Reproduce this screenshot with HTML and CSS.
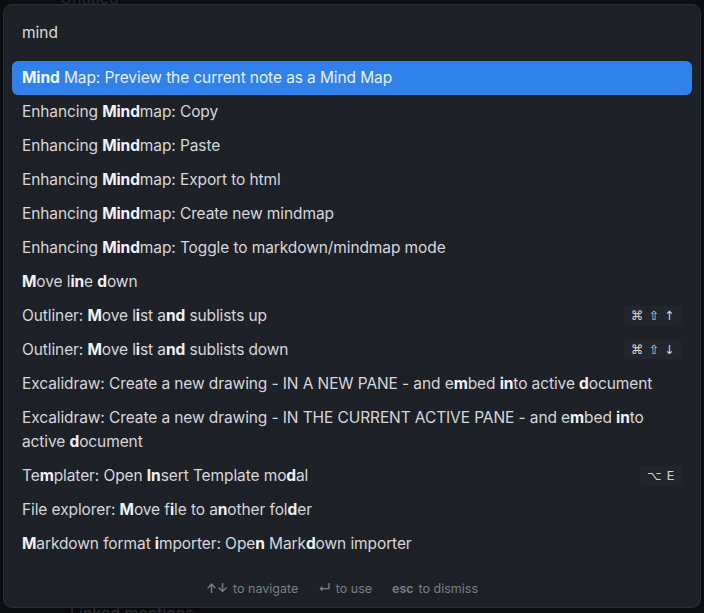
FILE: index.html
```html
<!DOCTYPE html>
<html>
<head>
<meta charset="utf-8">
<link rel="stylesheet" href="styles.css">
</head>
<body>
<div class="backdrop">
  <div class="bg-top">Untitled</div>
  <div class="bg-bottom">Linked mentions</div>
</div>
<div class="modal">
  <div class="search">mind</div>
  <div class="list">
    <div class="item selected"><span class="item-text"><b>Mind</b> Map: Preview the current note as a Mind Map</span></div>
    <div class="item"><span class="item-text">Enhancing <b>Mind</b>map: Copy</span></div>
    <div class="item"><span class="item-text">Enhancing <b>Mind</b>map: Paste</span></div>
    <div class="item"><span class="item-text">Enhancing <b>Mind</b>map: Export to html</span></div>
    <div class="item"><span class="item-text">Enhancing <b>Mind</b>map: Create new mindmap</span></div>
    <div class="item"><span class="item-text">Enhancing <b>Mind</b>map: Toggle to markdown/mindmap mode</span></div>
    <div class="item"><span class="item-text"><b>M</b>ove l<b>in</b>e <b>d</b>own</span></div>
    <div class="item"><span class="item-text">Outliner: <b>M</b>ove l<b>i</b>st a<b>nd</b> sublists up</span><span class="hotkey">⌘ ⇧ ↑</span></div>
    <div class="item"><span class="item-text">Outliner: <b>M</b>ove l<b>i</b>st a<b>nd</b> sublists down</span><span class="hotkey">⌘ ⇧ ↓</span></div>
    <div class="item"><span class="item-text">Excalidraw: Create a new drawing - IN A NEW PANE - and e<b>m</b>bed <b>in</b>to active <b>d</b>ocument</span></div>
    <div class="item"><span class="item-text">Excalidraw: Create a new drawing - IN THE CURRENT ACTIVE PANE - and e<b>m</b>bed <b>in</b>to active <b>d</b>ocument</span></div>
    <div class="item"><span class="item-text">Te<b>m</b>plater: Open <b>In</b>sert Template mo<b>d</b>al</span><span class="hotkey">⌥ E</span></div>
    <div class="item"><span class="item-text">File explorer: <b>M</b>ove f<b>i</b>le to a<b>n</b>other fol<b>d</b>er</span></div>
    <div class="item"><span class="item-text"><b>M</b>arkdown format <b>i</b>mporter: Ope<b>n</b> Mark<b>d</b>own importer</span></div>
  </div>
  <div class="footer">
    <span class="instr"><span class="cmd">↑↓</span>to navigate</span>
    <span class="instr"><span class="cmd">↵</span>to use</span>
    <span class="instr"><span class="cmd">esc</span>to dismiss</span>
  </div>
</div>
</body>
</html>
```
FILE: styles.css
```css
html, body {
  margin: 0;
  padding: 0;
  width: 704px;
  height: 613px;
  overflow: hidden;
  background: #0d0f13;
  font-family: Inter, "Liberation Sans", sans-serif;
}
.backdrop {
  position: relative;
  width: 704px;
  height: 613px;
}
.bg-top {
  position: absolute;
  left: 60px;
  top: -12px;
  color: #2c3038;
  font-size: 16px;
}
.bg-bottom {
  position: absolute;
  left: 70px;
  top: 603px;
  color: #3a3d44;
  font-size: 16px;
}
.modal {
  position: absolute;
  left: 3px;
  top: 4px;
  width: 698px;
  height: 604px;
  box-sizing: border-box;
  background: #1f2128;
  border: 1px solid #2b2e35;
  border-radius: 9px;
  display: flex;
  flex-direction: column;
  box-shadow: 0 2px 12px rgba(0,0,0,0.5);
}
.search {
  height: 52px;
  box-sizing: border-box;
  padding: 0 18px;
  display: flex;
  align-items: center;
  font-size: 15.5px;
  color: #dcddde;
  padding-top: 3px;
}
.list {
  padding: 4px 8px 0 8px;
  display: flex;
  flex-direction: column;
}
.item {
  display: flex;
  align-items: flex-start;
  justify-content: space-between;
  padding: 5px 10px;
  border-radius: 6px;
  font-size: 15.5px;
  line-height: 24px;
  color: #d6d7da;
  letter-spacing: -0.1px;
}
.item b {
  font-weight: 700;
  color: #f2f3f5;
}
.item.selected {
  background: #3081ea;
  color: #e6efff;
}
.item.selected b {
  color: #f4f8ff;
}
.item-text {
  flex: 1;
  min-width: 0;
}
.hotkey {
  flex: none;
  margin-left: 12px;
  margin-top: 2px;
  padding: 1px 7px;
  background: #24262d;
  border-radius: 4px;
  font-size: 12.5px;
  line-height: 17px;
  color: #d0d1d4;
  letter-spacing: 0.5px;
  font-family: "DejaVu Sans", sans-serif;
}
.footer {
  margin-top: auto;
  display: flex;
  justify-content: center;
  gap: 20px;
  padding: 0 20px 9px 0;
  font-size: 12.5px;
  line-height: 18px;
  color: #7c7f86;
}
.cmd {
  font-weight: 600;
  margin-right: 5px;
}
```
